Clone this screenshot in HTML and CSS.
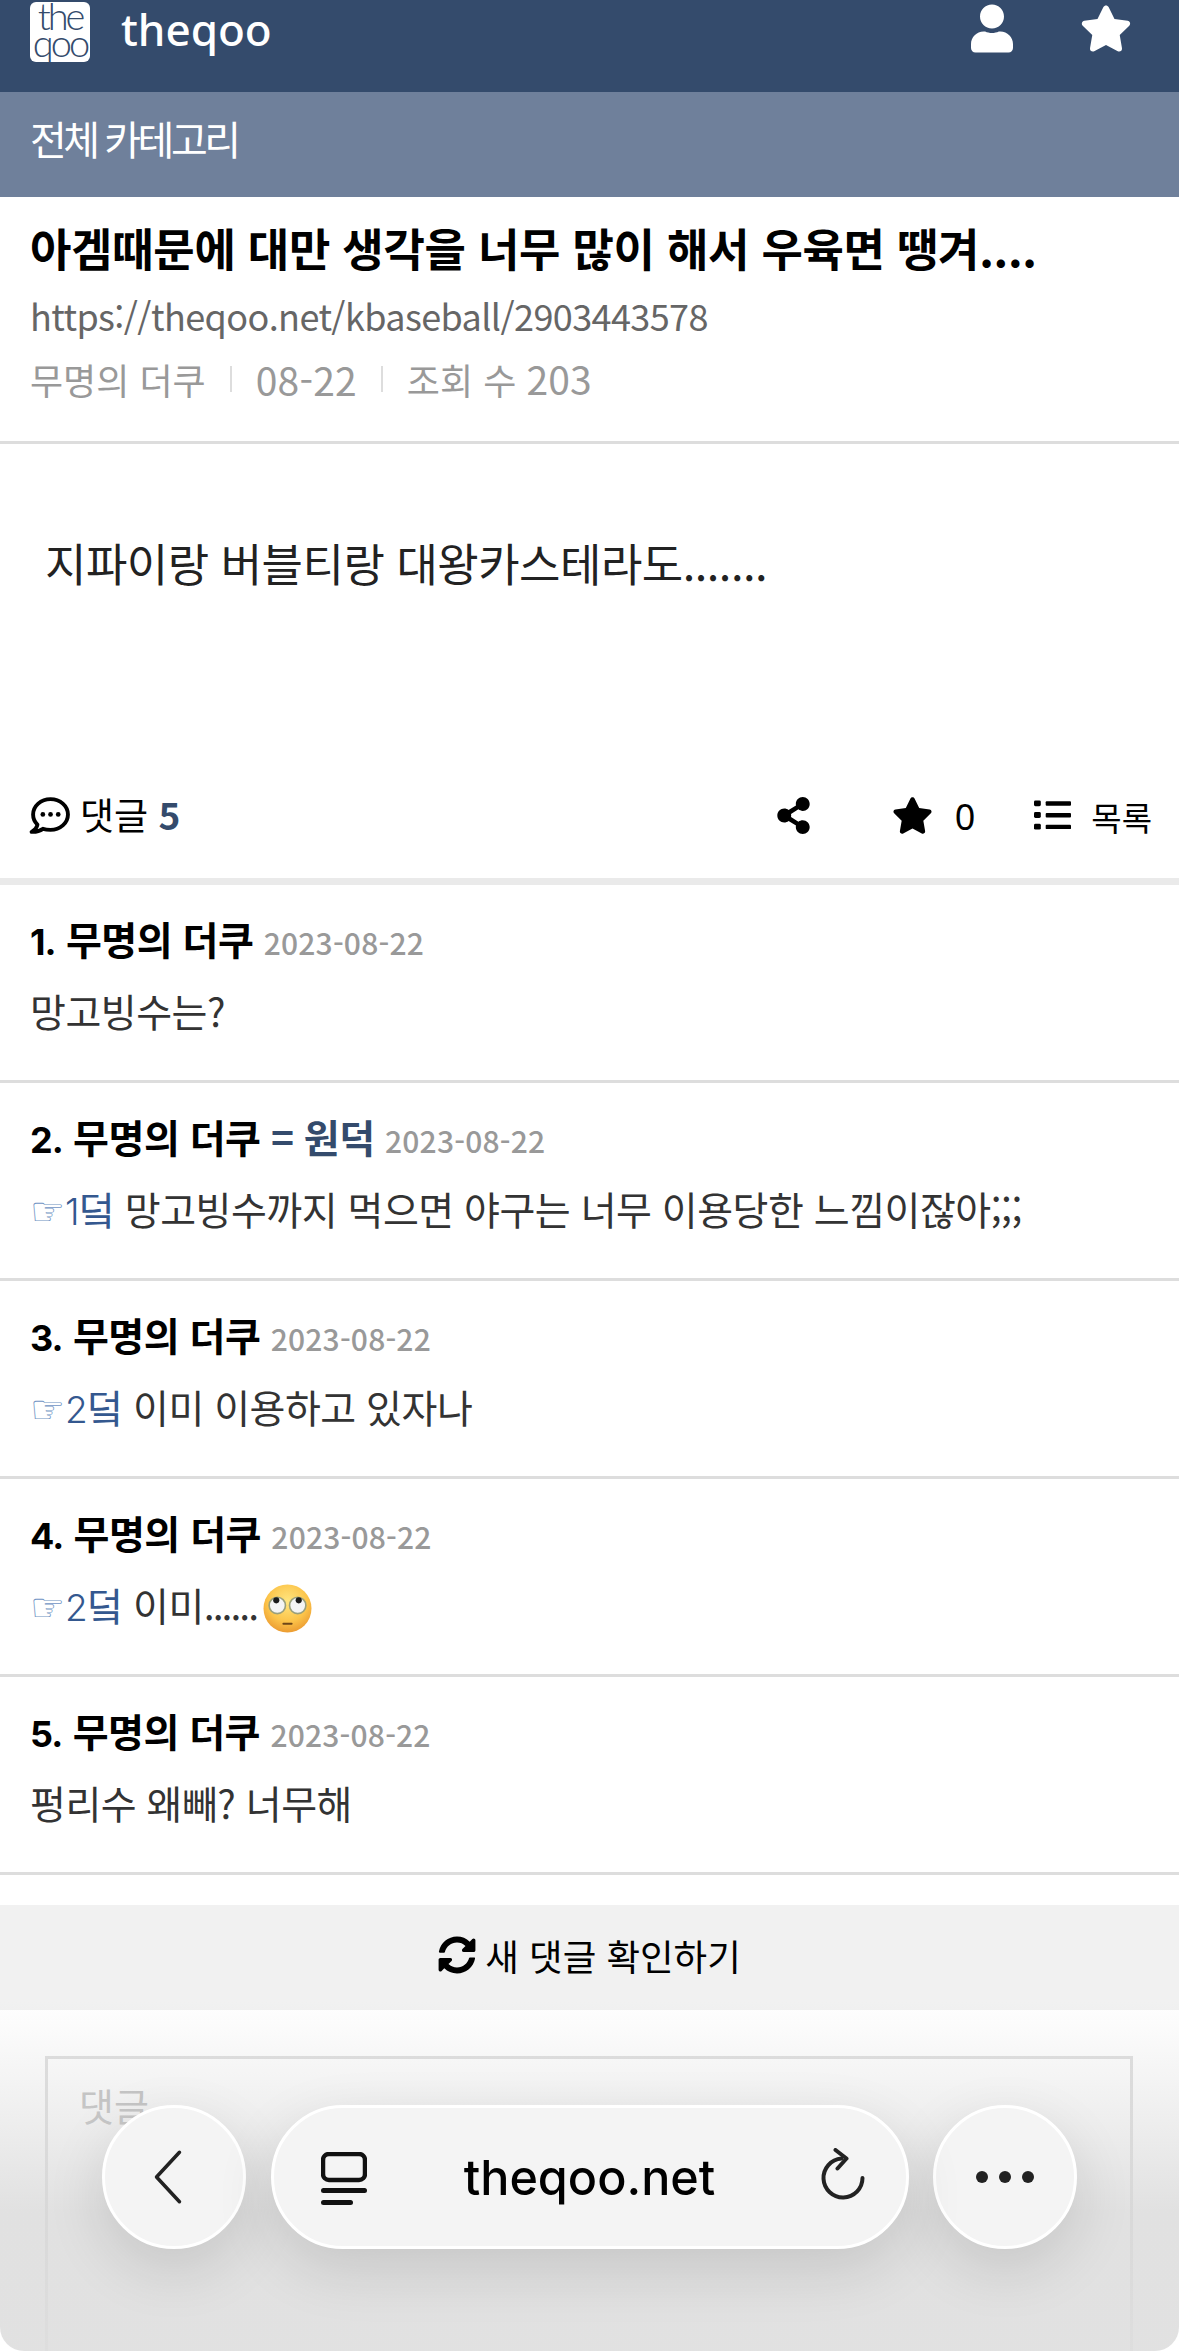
FILE: index.html
```html
<!DOCTYPE html>
<html lang="ko">
<head>
  <meta charset="UTF-8" />
  <meta name="viewport" content="width=device-width, initial-scale=1.0" />
  <title>theqoo</title>
  <link rel="stylesheet" href="styles.css">
</head>
<body>
  <div class="page">
    <header class="top">
      <div class="logo"><span>the</span><span>qoo</span></div>
      <div class="brand">theqoo</div>
      <svg class="top-icon user" viewBox="0 0 448 512"><path d="M224 256c70.7 0 128-57.3 128-128S294.7 0 224 0 96 57.3 96 128s57.3 128 128 128zm89.6 32h-16.7c-22.2 10.2-46.9 16-72.9 16s-50.6-5.8-72.9-16h-16.7C60.2 288 0 348.2 0 422.4V464c0 26.5 21.5 48 48 48h352c26.5 0 48-21.5 48-48v-41.6c0-74.2-60.2-134.4-134.4-134.4z"/></svg>
      <svg class="top-icon star" viewBox="0 0 576 512"><path d="M259.3 17.8L194 150.2 47.9 171.5c-26.2 3.8-36.7 36.1-17.7 54.6l105.7 103-25 145.5c-4.5 26.3 23.2 46 46.4 33.7L288 439.6l130.7 68.7c23.2 12.2 50.9-7.4 46.4-33.7l-25-145.5 105.7-103c19-18.5 8.5-50.8-17.7-54.6L382 150.2 316.7 17.8c-11.7-23.6-45.6-23.9-57.4 0z"/></svg>
    </header>
    <div class="category">전체 카테고리</div>

    <section class="post-head">
      <h1>아겜때문에 대만 생각을 너무 많이 해서 우육면 땡겨....</h1>
      <div class="url">https://theqoo.net/kbaseball/2903443578</div>
      <div class="meta">
        <span>무명의 더쿠</span><i></i><span class="digits">08-22</span><i></i><span>조회 수 <span class="digits">203</span></span>
      </div>
    </section>

    <section class="post-body">지파이랑 버블티랑 대왕카스테라도.......</section>

    <div class="actions">
      <svg class="ic-comment" viewBox="0 0 40 36">
        <path d="M21 2C11.600 2 4 8.700 4 17c0 3.800 1.500 7.200 4.200 9.900C7.800 29.600 6 32 2.600 34c4.400.2 8.200-1 11-3 2.200.7 4.700 1 7.400 1 9.400 0 17-6.700 17-15S30.400 2 21 2z" fill="none" stroke="#000" stroke-width="3.800" stroke-linejoin="round"/>
        <circle cx="13.500" cy="17" r="2.300"/><circle cx="21" cy="17" r="2.300"/><circle cx="28.500" cy="17" r="2.300"/>
      </svg>
      <span class="reply-label">댓글 <b>5</b></span>
      <svg class="ic-share" viewBox="0 0 448 512"><path d="M352 320c-22.608 0-43.387 7.819-59.79 20.895l-102.486-64.054a96.551 96.551 0 0 0 0-41.683l102.486-64.054C308.613 184.181 329.392 192 352 192c53.019 0 96-42.981 96-96S405.019 0 352 0s-96 42.981-96 96c0 7.158.79 14.13 2.276 20.841L155.790 180.895C139.387 167.819 118.608 160 96 160c-53.019 0-96 42.981-96 96s42.981 96 96 96c22.608 0 43.387-7.819 59.790-20.895l102.486 64.054A96.301 96.301 0 0 0 256 416c0 53.019 42.981 96 96 96s96-42.981 96-96-42.981-96-96-96z"/></svg>
      <svg class="ic-star" viewBox="0 0 576 512"><path d="M259.3 17.8L194 150.2 47.9 171.5c-26.2 3.8-36.7 36.1-17.7 54.6l105.7 103-25 145.5c-4.5 26.3 23.2 46 46.4 33.7L288 439.6l130.7 68.7c23.2 12.2 50.9-7.4 46.4-33.7l-25-145.5 105.7-103c19-18.5 8.5-50.8-17.7-54.6L382 150.2 316.7 17.8c-11.7-23.6-45.6-23.9-57.4 0z"/></svg>
      <span class="vote">0</span>
      <svg class="ic-list" viewBox="0 0 38 30">
        <rect x="0" y="0" width="7" height="6" rx="1.500"/><rect x="0" y="12" width="7" height="6" rx="1.500"/><rect x="0" y="24" width="7" height="6" rx="1.500"/>
        <rect x="12" y="1" width="26" height="4.500" rx="1"/><rect x="12" y="13" width="26" height="4.500" rx="1"/><rect x="12" y="25" width="26" height="4.500" rx="1"/>
      </svg>
      <span class="list-label">목록</span>
    </div>

    <ul class="comments">
      <li>
        <div class="c-head"><span class="num">1.</span> 무명의 더쿠 <time>2023-08-22</time></div>
        <p>망고빙수는?</p>
      </li>
      <li>
        <div class="c-head"><span class="num">2.</span> 무명의 더쿠 <em>= 원덕</em> <time>2023-08-22</time></div>
        <p><span class="hand">☞</span><a><span class="ref-no">1</span>덬</a> 망고빙수까지 먹으면 야구는 너무 이용당한 느낌이잖아;;;</p>
      </li>
      <li>
        <div class="c-head"><span class="num">3.</span> 무명의 더쿠 <time>2023-08-22</time></div>
        <p><span class="hand">☞</span><a><span class="ref-no">2</span>덬</a> 이미 이용하고 있자나</p>
      </li>
      <li>
        <div class="c-head"><span class="num">4.</span> 무명의 더쿠 <time>2023-08-22</time></div>
        <p><span class="hand">☞</span><a><span class="ref-no">2</span>덬</a> 이미<span class="ell">......</span><svg class="emoji" viewBox="0 0 48 48">
          <defs><radialGradient id="face" cx="50%" cy="35%" r="70%"><stop offset="0" stop-color="#ffe680"/><stop offset=".6" stop-color="#fcc44a"/><stop offset="1" stop-color="#e8932c"/></radialGradient></defs>
          <circle cx="24" cy="24" r="23.500" fill="url(#face)"/>
          <circle cx="14" cy="21" r="8" fill="#f4f4f4" stroke="#9aa07c" stroke-width="1.600"/>
          <circle cx="34" cy="21" r="8" fill="#f4f4f4" stroke="#9aa07c" stroke-width="1.600"/>
          <circle cx="13" cy="16" r="3" fill="#1a1a1a"/><circle cx="35" cy="16" r="3" fill="#1a1a1a"/>
          <rect x="19" y="38" width="10" height="2" rx="1" fill="#6e4618"/>
        </svg></p>
      </li>
      <li>
        <div class="c-head"><span class="num">5.</span> 무명의 더쿠 <time>2023-08-22</time></div>
        <p>펑리수 왜빼? 너무해</p>
      </li>
    </ul>

    <div class="refresh">
      <svg viewBox="0 0 512 512"><path d="M370.72 133.28C339.458 104.008 298.888 87.962 255.848 88c-77.458.068-144.328 53.178-162.791 126.85-1.344 5.363-6.122 9.15-11.651 9.15H24.103c-7.498 0-13.194-6.807-11.807-14.176C33.933 94.924 134.813 8 256 8c66.448 0 126.791 26.136 171.315 68.685L463.03 40.97C478.149 25.851 504 36.559 504 57.941V192c0 13.255-10.745 24-24 24H345.941c-21.382 0-32.090-25.851-16.971-40.971l41.750-41.749zM32 296h134.059c21.382 0 32.090 25.851 16.971 40.971l-41.750 41.750c31.262 29.273 71.835 45.319 114.876 45.280 77.418-.07 144.315-53.144 162.787-126.849 1.344-5.363 6.122-9.150 11.651-9.150h57.304c7.498 0 13.194 6.807 11.807 14.176C478.067 417.076 377.187 504 256 504c-66.448 0-126.791-26.136-171.315-68.685L48.970 471.030C33.851 486.149 8 475.441 8 454.059V320c0-13.255 10.745-24 24-24z"/></svg>
      <span>새 댓글 확인하기</span>
    </div>

    <div class="reply-box"><span>댓글</span></div>

    <div class="browser-fade"></div>
    <nav class="browser-bar">
      <div class="round-btn">
        <svg class="b-back" viewBox="0 0 34 62"><path d="M30 3L4 31l26 28" fill="none" stroke="#222" stroke-width="4" stroke-linecap="round" stroke-linejoin="round"/></svg>
      </div>
      <div class="url-pill">
        <svg class="b-tabs" viewBox="0 0 46 53">
          <rect x="2" y="2" width="42" height="26" rx="6" fill="none" stroke="#111" stroke-width="4.500"/>
          <rect x="0" y="36" width="46" height="5" rx="2.500" fill="#111"/>
          <rect x="0" y="48" width="32" height="5" rx="2.500" fill="#111"/>
        </svg>
        <span class="host">theqoo.net</span>
        <svg class="b-reload" viewBox="0 0 44 58"><path d="M20 10.500A19.500 19.500 0 1 0 41 30" fill="none" stroke="#222" stroke-width="4" stroke-linecap="round"/><path d="M14 2l11 8.500-9 10" fill="none" stroke="#222" stroke-width="4" stroke-linecap="round" stroke-linejoin="round"/></svg>
      </div>
      <div class="round-btn dots"><i></i><i></i><i></i></div>
    </nav>
  </div>
</body>
</html>
```

FILE: styles.css
```css
* {
  box-sizing: border-box;
}
html, body {
  margin: 0;
  padding: 0;
  background: #fff;
}
body {
  font-family: "Noto Sans CJK KR", "Noto Sans", sans-serif;
  color: #000;
}
.page {
  position: relative;
  width: 1179px;
  height: 2351px;
  overflow: hidden;
  background: #fff;
}

/* top bars */
.top {
  height: 92px;
  background: #344b6c;
  display: flex;
  align-items: flex-start;
  padding: 2px 0 0 30px;
}
.logo {
  width: 60px;
  height: 60px;
  background: #fff;
  border-radius: 6px;
  color: #344b6c;
  font-family: "Lato", sans-serif;
  font-weight: 300;
  font-size: 38px;
  line-height: 27px;
  letter-spacing: -3px;
  text-align: center;
  flex: none;
}
.logo span {
  display: block;
}
.brand {
  font-family: "Noto Sans", sans-serif;
  font-size: 44px;
  font-weight: 500;
  line-height: 54px;
  color: #fff;
  margin-left: 31px;
  flex: 1;
}
.top-icon {
  fill: #fff;
  height: 49px;
  margin-top: 2px;
}
.top-icon.user {
  width: 42px;
}
.top-icon.star {
  width: 52px;
  margin-left: 67px;
  margin-right: 47px;
}
.category {
  height: 105px;
  background: #6f809b;
  color: #fff;
  font-size: 40px;
  line-height: 92px;
  letter-spacing: -3.500px;
  padding-left: 30px;
}

/* post */
.post-head {
  height: 247px;
  padding: 21px 30px 0;
  border-bottom: 3px solid #ddd;
}
.post-head h1 {
  margin: 0;
  font-size: 45px;
  line-height: 60px;
  font-weight: 700;
  letter-spacing: -.3px;
  white-space: nowrap;
}
.url {
  font-size: 36px;
  line-height: 50px;
  color: #666;
  margin-top: 12px;
  letter-spacing: -.6px;
}
.meta {
  display: flex;
  align-items: center;
  font-size: 36px;
  line-height: 50px;
  color: #999;
  margin-top: 13px;
}
.meta .digits {
  font-size: 39px;
  line-height: 50px;
  letter-spacing: .2px;
}
.meta i {
  width: 2px;
  height: 26px;
  background: #ddd;
  margin: 0 24px;
}
.post-body {
  height: 339px;
  padding: 89px 0 0 45px;
  font-size: 45px;
  line-height: 60px;
  letter-spacing: -.5px;
  color: #222;
}

.actions {
  height: 107px;
  border-bottom: 7px solid #eaeaea;
  margin-top: -5px;
  display: flex;
  align-items: flex-start;
  padding: 19px 27px 0 30px;
  font-size: 37px;
  line-height: 40px;
}
.actions svg {
  flex: none;
}
.ic-comment {
  width: 41px;
  height: 37px;
  margin-left: -1px;
}
.reply-label {
  margin-left: 10px;
  flex: 1;
  line-height: 34px;
}
.reply-label b {
  color: #344b6c;
  font-weight: 700;
}
.ic-share {
  width: 33px;
  height: 37px;
}
.ic-star {
  width: 41px;
  height: 37px;
  margin-left: 82px;
}
.vote {
  margin-left: 22px;
  font-family: "Noto Sans", sans-serif;
  font-size: 36px;
}
.ic-list {
  width: 37px;
  height: 30px;
  margin: 3px 0 0 59px;
}
.list-label {
  margin-left: 20px;
  font-size: 33px;
}

/* comments */
.comments {
  list-style: none;
  margin: 0;
  padding: 0;
}
.comments li {
  height: 198px;
  border-bottom: 3px solid #ddd;
  padding: 24px 30px 0;
}
.c-head {
  font-size: 39px;
  line-height: 58px;
  font-weight: 700;
  letter-spacing: -.5px;
  white-space: nowrap;
}
.num {
  font-family: "Inter", sans-serif;
  font-size: 36px;
  letter-spacing: -1px;
}
.c-head em {
  font-style: normal;
  color: #344b6c;
}
.c-head time {
  font-size: 30px;
  font-weight: 500;
  color: #999;
  letter-spacing: .2px;
}
.comments p {
  margin: 11px 0 0;
  font-size: 39px;
  line-height: 56px;
  color: #333;
  letter-spacing: -.5px;
  white-space: nowrap;
}
.comments a {
  color: #34588f;
}
.ref-no {
  font-family: "Inter", sans-serif;
  font-size: 37px;
  font-weight: 300;
}
.hand {
  font-family: "DejaVu Sans", sans-serif;
  color: #6f94c4;
  font-size: 39px;
  letter-spacing: 0;
}
.ell {
  letter-spacing: -2px;
}
.emoji {
  width: 49px;
  height: 49px;
  vertical-align: -12px;
  margin-left: 6px;
}

.refresh {
  height: 105px;
  margin-top: 30px;
  padding-bottom: 5px;
  background: #f1f1f1;
  display: flex;
  align-items: center;
  justify-content: center;
  font-size: 36.500px;
  gap: 9px;
}
.refresh svg {
  width: 38px;
  height: 38px;
}
.reply-box {
  height: 400px;
  margin: 46px 46px 0 45px;
  border: 3px solid #ddd;
  padding: 18px 31px;
  font-size: 38px;
  color: #bbb;
}

/* browser chrome, floats over the page */
.browser-fade {
  position: absolute;
  left: 0;
  right: 0;
  bottom: 0;
  height: 350px;
  background: linear-gradient(to bottom, rgba(215,215,215,0), rgba(215,215,215,.75) 60%, rgba(222,222,222,.9));
  border-radius: 0 0 24px 24px;
}
.browser-bar {
  position: absolute;
  left: 102px;
  top: 2105px;
  width: 975px;
  height: 144px;
  display: flex;
  justify-content: space-between;
}
.round-btn, .url-pill {
  background: #f4f4f4;
  border: 3px solid #fff;
  box-shadow: 0 20px 60px rgba(0,0,0,.12);
}
.round-btn {
  width: 144px;
  height: 144px;
  border-radius: 50%;
  display: flex;
  align-items: center;
  justify-content: center;
}
.url-pill {
  width: 638px;
  height: 144px;
  border-radius: 72px;
  position: relative;
  display: flex;
  align-items: center;
  justify-content: center;
}
.host {
  font-family: "Inter", sans-serif;
  font-weight: 500;
  font-size: 48.500px;
  color: #000;
}
.b-back {
  width: 30px;
  height: 56px;
  margin-left: -12px;
}
.b-tabs {
  position: absolute;
  left: 47px;
  top: 44px;
  width: 46px;
  height: 53px;
}
.b-reload {
  position: absolute;
  right: 40px;
  top: 40px;
  width: 45px;
  height: 58px;
}
.dots {
  gap: 11px;
}
.dots i {
  width: 12px;
  height: 12px;
  border-radius: 50%;
  background: #222;
}
```
